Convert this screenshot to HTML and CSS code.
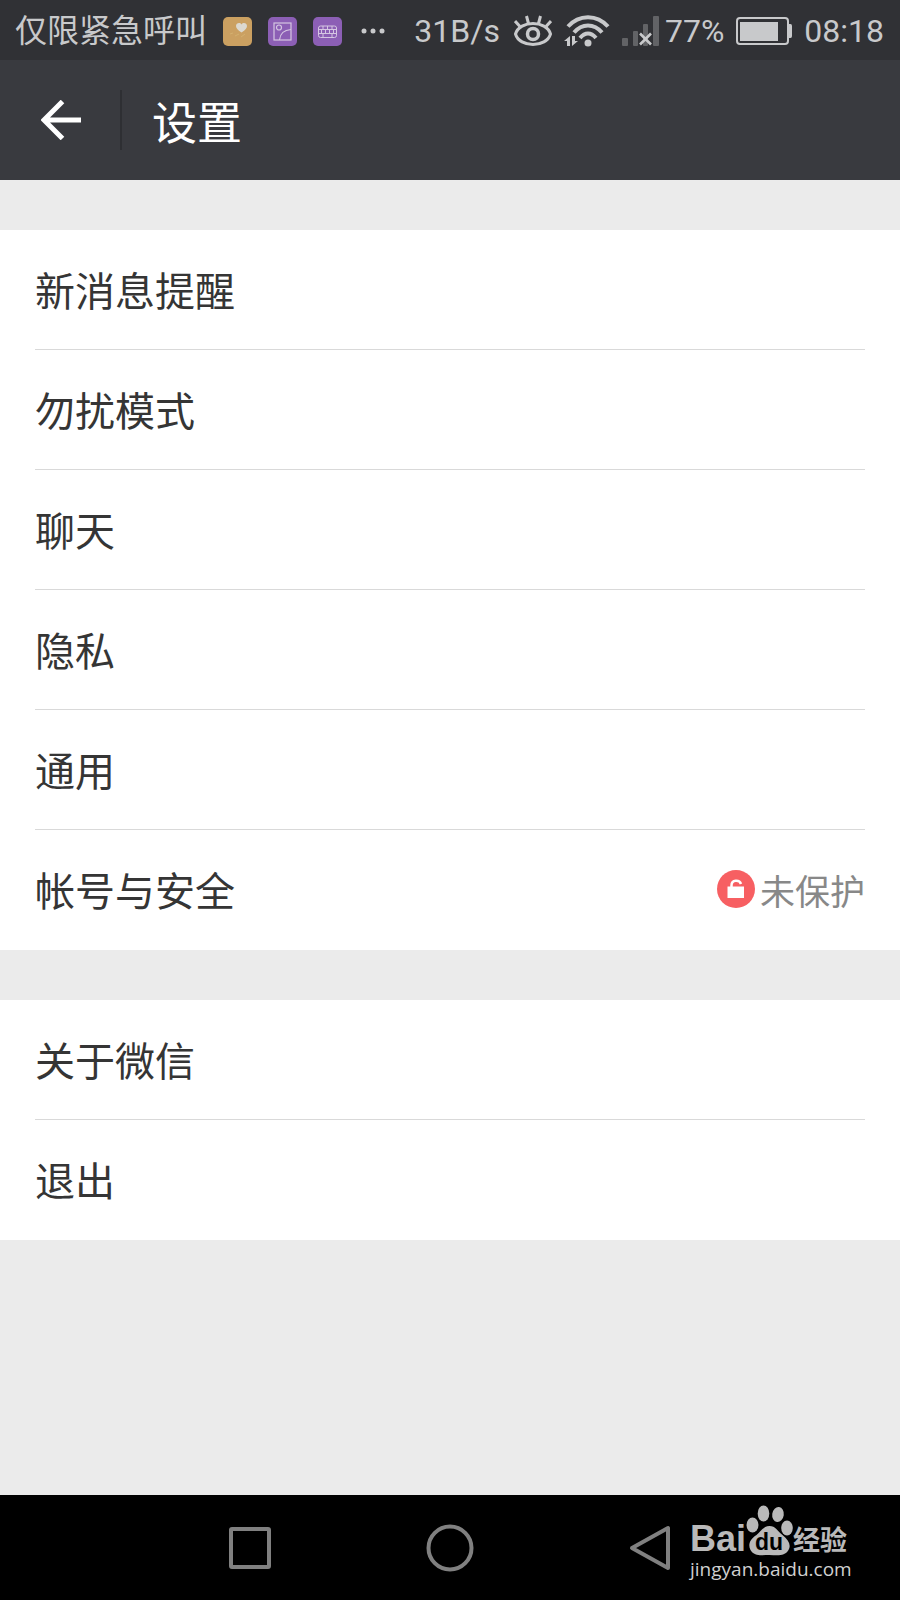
FILE: index.html
```
<!DOCTYPE html>
<html lang="zh-CN">
<head>
  <meta charset="UTF-8" />
  <meta name="viewport" content="width=device-width, initial-scale=1.0" />
  <title>设置</title>
  <link rel="stylesheet" href="styles.css">
</head>
<body>
  <div class="status-bar">
    <div class="status-left">
      <span>仅限紧急呼叫</span>
      <svg class="app-icon" viewBox="0 0 29 29">
        <rect width="29" height="29" rx="5" fill="#cba061" />
        <path d="M18.500 15.500c-4-2.500-5.500-4.500-5.500-6.500 0-3 4-4 5.500-1.500 1.500-2.500 5.500-1.500 5.500 1.500 0 2-1.500 4-5.500 6.500z" fill="#dcd8cf" />
        <path d="M7 17l3-1M12 19l4-2M18 20l4-3" stroke="#d4b06f" fill="none" />
      </svg>
      <svg class="app-icon" viewBox="0 0 29 29">
        <rect width="29" height="29" rx="5" fill="#8c5fb5" />
        <g fill="none" stroke="#d5c6e2" stroke-width="1.200">
          <rect x="6" y="6" width="17" height="17" />
          <circle cx="11" cy="10.500" r="2.500" />
          <path d="M11.500 23c.5-6 4-10 11.500-10.500" />
        </g>
      </svg>
      <svg class="app-icon" viewBox="0 0 29 29">
        <rect width="29" height="29" rx="5" fill="#8c5fb5" />
        <g fill="none" stroke="#d5c6e2">
          <rect x="5.500" y="9" width="18" height="11.500" rx="2" />
          <path d="M5.500 12.500h18M5.500 16.500h18M10 9v3.500M14.500 9v3.500M19 9v3.500M8.500 12.500v4M12.500 12.500v4M16.500 12.500v4M20.500 12.500v4M10 16.500v4M19 16.500v4" />
        </g>
      </svg>
      <svg class="more-icon" viewBox="0 0 24 6" fill="#c8c9cb">
        <circle cx="3" cy="3" r="2.500" /><circle cx="12" cy="3" r="2.500" /><circle cx="21" cy="3" r="2.500" />
      </svg>
    </div>
    <div class="status-right">
      <span>31B/s</span>
      <svg class="eye-icon" viewBox="0 0 38 32" fill="none" stroke="#c8c9cb" stroke-width="3">
        <path d="M1.500 19c4-14 31-14 35 0-4 14-31 14-35 0z" />
        <circle cx="19" cy="19" r="5.500" stroke-width="3.500" />
        <path d="M6 11.500L1 6M14.500 8.500L12.500 1M24.500 8.500L26.500 1M32 11.500L37 6" />
      </svg>
      <svg class="wifi-icon" viewBox="0 0 46 32">
        <g fill="none" stroke="#c8c9cb" stroke-width="4">
          <path d="M4 11.500c11-12.500 29-12.500 40 0" />
          <path d="M10 17.500c8-9.500 20-9.500 28 0" />
          <path d="M16 23c5-6 11-6 16 0" />
        </g>
        <g fill="#c8c9cb">
          <circle cx="24" cy="28" r="3.500" />
          <path d="M0 26l6-5v10H3v-5zM8 21h3v5h3l-6 5z" />
        </g>
      </svg>
      <svg class="signal-icon" viewBox="0 0 37 31">
        <g fill="#626366">
          <rect x="0" y="22" width="6" height="8" rx="1" />
          <rect x="11" y="15" width="5" height="15" rx="1" />
          <rect x="21" y="8" width="5" height="22" rx="1" />
          <rect x="31" y="0" width="6" height="30" rx="1" />
        </g>
        <path d="M18 17.500l11 11M29 17.500l-11 11" stroke="#c8c9cb" stroke-width="2.600" />
      </svg>
      <span>77%</span>
      <svg class="battery-icon" viewBox="0 0 56 28">
        <rect x="1" y="1" width="51" height="26" rx="3" fill="none" stroke="#c8c9cb" stroke-width="2" />
        <path d="M4 5h38v19H4zM53 7h1.500q1.500 0 1.500 2v10q0 2-1.500 2H53z" fill="#c8c9cb" />
      </svg>
      <span>08:18</span>
    </div>
  </div>

  <header class="title-bar">
    <button class="back" aria-label="返回">
      <svg viewBox="0 0 40 40" fill="none" stroke="#fff" stroke-width="5">
        <path d="M40 20H3M21.500 1.500L3 20l18.500 18.500" />
      </svg>
    </button>
    <h1>设置</h1>
  </header>

  <main>
    <nav class="group">
      <a class="row" href="#">新消息提醒</a>
      <a class="row" href="#">勿扰模式</a>
      <a class="row" href="#">聊天</a>
      <a class="row" href="#">隐私</a>
      <a class="row" href="#">通用</a>
      <a class="row" href="#">帐号与安全
        <span class="state">
          <svg viewBox="0 0 38 38">
            <circle cx="19" cy="19" r="19" fill="#f75f62" />
            <path d="M10.500 16.500h16.500v11.500H10.500z" fill="#fff" />
            <path d="M14.500 17v-1.500c0-6 8-6 9.500-1.500" fill="none" stroke="#fff" stroke-width="2.500" />
          </svg>
          未保护
        </span>
      </a>
    </nav>
    <nav class="group">
      <a class="row" href="#">关于微信</a>
      <a class="row" href="#">退出</a>
    </nav>
  </main>

  <footer class="nav-bar">
    <button aria-label="最近任务">
      <svg viewBox="0 0 48 48"><rect x="5" y="5" width="38" height="38" rx="1" /></svg>
    </button>
    <button aria-label="主屏幕">
      <svg viewBox="0 0 48 48"><circle cx="24" cy="24" r="21.500" /></svg>
    </button>
    <button aria-label="返回上一页">
      <svg viewBox="0 0 48 48"><path d="M42 4v40L6 24z" /></svg>
    </button>
    <div class="watermark">
      <div class="brand">
        <span class="bai">Bai</span>
        <svg class="paw" viewBox="0 0 47 51">
          <g fill="#b9b9b9">
            <ellipse cx="6.500" cy="20" rx="6" ry="7.500" />
            <ellipse cx="17.500" cy="8.500" rx="5.800" ry="8" />
            <ellipse cx="32" cy="9.500" rx="5.800" ry="7.500" transform="rotate(8 32 9.500)" />
            <ellipse cx="41" cy="23" rx="5.800" ry="7.500" />
            <path d="M23.500 21c6 0 8 5 13 9 6 5 9 10 6 15-4 7-12 5-19 5s-15 2-19-5c-3-6 0-11 6-15 5-4 7-9 13-9z" />
          </g>
          <text x="23" y="45" text-anchor="middle">du</text>
        </svg>
        <span class="jingyan">经验</span>
      </div>
      <div class="site">jingyan.baidu.com</div>
    </div>
  </footer>
</body>
</html>
```
FILE: styles.css
```
* {
  box-sizing: border-box;
}
body {
  margin: 0;
  min-height: 100vh;
  display: flex;
  flex-direction: column;
  background: #ebebeb;
  color: #353535;
  font-family: Roboto, 'Noto Sans CJK SC', sans-serif;
}
svg {
  display: block;
  flex: none;
}
button {
  padding: 0;
  border: none;
  background: none;
  cursor: pointer;
}

/* status bar */
.status-bar {
  display: flex;
  justify-content: space-between;
  align-items: center;
  height: 60px;
  padding: 2px 16px 0 15px;
  background: #303135;
  color: #c8c9cb;
  font-size: 32px;
  line-height: 58px;
  white-space: nowrap;
}
.status-left,
.status-right {
  display: flex;
  align-items: center;
}
.status-left {
  gap: 16px;
}
.status-right {
  gap: 12px;
}
.app-icon {
  width: 29px;
  height: 29px;
}
.more-icon {
  width: 24px;
  height: 6px;
  margin-left: 3px;
}
.eye-icon {
  width: 38px;
  height: 32px;
  margin-left: 2px;
}
.wifi-icon {
  width: 46px;
  height: 32px;
}
.signal-icon {
  width: 37px;
  height: 31px;
  margin-right: -6px;
}
.battery-icon {
  width: 56px;
  height: 28px;
}

/* title bar */
.title-bar {
  display: flex;
  align-items: center;
  height: 120px;
  background: #393a3f;
  color: #fff;
}
.back {
  display: flex;
  align-items: center;
  width: 122px;
  height: 60px;
  padding-left: 41px;
  border-right: 2px solid #2e2f33;
}
.back svg {
  width: 40px;
  height: 40px;
}
h1 {
  margin: 0;
  padding: 10px 0 0 30px;
  font-size: 45px;
  font-weight: 400;
  line-height: 60px;
}

/* settings list */
main {
  flex: 1;
}
.group {
  margin-top: 50px;
  padding: 0 35px;
  background: #fff;
}
.row {
  display: flex;
  justify-content: space-between;
  align-items: center;
  height: 120px;
  padding-bottom: 2px;
  border-bottom: 1px solid #d9d9d9;
  color: inherit;
  font-size: 40px;
  text-decoration: none;
}
.row:last-child {
  border-bottom: none;
}
.state {
  display: flex;
  align-items: center;
  gap: 5px;
  color: #888;
  font-size: 35px;
}
.state svg {
  width: 38px;
  height: 38px;
}

/* navigation bar */
.nav-bar {
  position: relative;
  display: flex;
  height: 105px;
  padding: 0 16.666%;
  background: #000;
}
.nav-bar button {
  flex: 1;
  display: flex;
  justify-content: center;
  align-items: center;
}
.nav-bar button svg {
  width: 48px;
  height: 48px;
  fill: none;
  stroke: #808080;
  stroke-width: 4;
  stroke-linejoin: round;
}
.watermark {
  position: absolute;
  right: 48px;
  bottom: 18px;
  width: 162px;
  color: #b9b9b9;
}
.brand {
  display: flex;
  align-items: flex-end;
  height: 52px;
}
.bai {
  font: bold 36px/34px 'Liberation Sans', sans-serif;
}
.paw {
  width: 47px;
  height: 51px;
}
.paw text {
  font: bold 23px 'Liberation Sans', sans-serif;
  fill: #000;
}
.jingyan {
  font-size: 27px;
  font-weight: 700;
  line-height: 30px;
}
.site {
  color: #d0d0d0;
  font: 19px/26px 'Open Sans', sans-serif;
}
```
